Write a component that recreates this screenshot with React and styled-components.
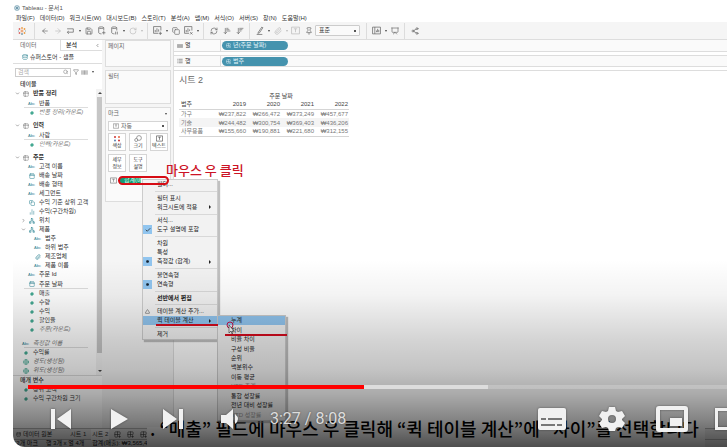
import React from "react";
import styled, { createGlobalStyle, css } from "styled-components";
import {
  ArrowLeft, ArrowRight, Save, Database, RotateCw, Copy,
  ArrowDownNarrowWide, ArrowDownWideNarrow, Paperclip, Type, Pin, Presentation, Share2, Search, Filter,
  ChevronLeft, ChevronDown, ChevronRight, Table2, Calendar, Network, Globe, Hash, RefreshCw,
  List, Grid2X2Plus, Check, Triangle, ChartNoAxesColumn, Circle,
} from "lucide-react";

const Global = createGlobalStyle`
  * { box-sizing: border-box; }
  body { margin: 0; background: #fff; overflow: hidden; }
  button, input, select { font: inherit; color: inherit; margin: 0; padding: 0; border: 0; background: none; }
`;

const Stage = styled.main`
  position: relative;
  display: flex;
  flex-direction: column;
  min-height: 100vh;
  margin-left: 13px;
  overflow: hidden;
  border-bottom-left-radius: 12px;
  background: #fff;
  color: #333;
  font: 6px/9px "Liberation Sans", "Noto Sans CJK KR", sans-serif;
  white-space: nowrap;
`;

const TitleBar = styled.header`
  display: flex;
  align-items: center;
  gap: 2px;
  height: 14px;
  padding: 2px 1px 0;
  color: #555;
`;

const MenuBar = styled.nav`
  display: flex;
  gap: 5px;
  height: 8px;
  padding-left: 3px;
  line-height: 7px;
`;

const MenuButton = styled.button`
  line-height: 7px;
`;

const Toolbar = styled.div`
  display: flex;
  align-items: center;
  height: 18px;
  background: #f5f5f5;
  border-bottom: 1px solid #ddd;
  svg { display: block; }
`;

const Tool = styled.button`
  display: grid;
  place-items: center;
  width: ${(p) => (p.$wide ? 18 : 13)}px;
  height: 12px;
  color: ${(p) => (p.$off ? "#bbb" : "#666")};
`;

const Caret = styled.span`
  width: 5px;
  display: grid;
  place-items: center;
  &::after {
    content: "";
    border: 1px solid transparent;
    border-top: 2px solid ${(p) => (p.$off ? "#bbb" : "#444")};
    border-bottom: 0;
  }
`;

const Divider = styled.span`
  width: 1px;
  height: 16px;
  margin: 0 3px;
  background: #dcdcdc;
`;

const FitSelect = styled.select`
  width: 45px;
  height: 11px;
  margin: 0 3px 0 0;
  padding: 0 3px;
  border: 1px solid #ccc;
  border-radius: 1px;
  appearance: none;
  background: linear-gradient(#555, #555) right 3px center / 2px 2px no-repeat #fafafa;
  line-height: 9px;
`;

const Workspace = styled.div`
  display: grid;
  grid-template-columns: 89px 71px 1fr;
  flex: 1;
`;

const DataPane = styled.aside`
  display: flex;
  flex-direction: column;
  background: #fff;
`;

const Tabs = styled.div`
  display: grid;
  grid-template-columns: 47px 1fr;
  height: 11px;
`;

const Tab = styled.button`
  display: flex;
  justify-content: space-between;
  align-items: center;
  padding: 0 2px 0 ${(p) => (p.$active ? 7 : 5)}px;
  border: solid #ddd;
  border-width: ${(p) => (p.$active ? "0" : "0 0 1px 1px")};
  color: ${(p) => (p.$active ? "#666" : "#222")};
  font-weight: ${(p) => (p.$active ? 400 : 500)};
`;

const Source = styled.div`
  display: flex;
  align-items: center;
  gap: 2px;
  height: 13px;
  padding-left: 9px;
  border-bottom: 1px solid #ddd;
`;

const SearchRow = styled.div`
  display: flex;
  align-items: center;
  gap: 2px;
  height: 16px;
  padding: 0 5px 0 2px;
  color: #666;
`;

const SearchBox = styled.label`
  display: flex;
  align-items: center;
  width: 56px;
  height: 9px;
  padding: 0 2px;
  border: 1px solid #ccc;
  input { width: 100%; min-width: 0; height: 7px; line-height: 7px; outline: 0; }
  input::placeholder { color: #aaa; }
`;

const Heading = styled.h2`
  margin: 0;
  padding-left: 7px;
  font-size: 6px;
  font-weight: 500;
  line-height: 9px;
`;

const TreeWrap = styled.div`
  display: grid;
  grid-template-columns: 1fr 7px;
  border-bottom: 1px solid #ddd;
`;

const Tree = styled.ul`
  margin: 0;
  padding: 0 8px 0 2px;
  list-style: none;
`;

const Row = styled.li`
  display: grid;
  grid-template-columns: 7px 11px 1fr;
  align-items: center;
  height: ${(p) => (p.$line ? 10 : 9)}px;
  margin-top: ${(p) => (p.$gap ? 4 : 0)}px;
  padding-left: ${(p) => p.$level * 6}px;
  background: ${(p) => (p.$line ? "linear-gradient(#ddd, #ddd) 9px 100% / 100% 1px no-repeat" : "none")};
  font-weight: ${(p) => (p.$bold ? 700 : 400)};
  font-style: ${(p) => (p.$italic ? "italic" : "normal")};
  color: ${(p) => (p.$italic ? "#777" : "#333")};
  svg { display: block; }
`;

const Glyph = styled.span`
  display: flex;
  justify-content: center;
  width: 7px;
  color: ${(p) => p.$tone};
  font-size: 4px;
  font-style: normal;
  font-weight: 400;
`;

const Scroll = styled.div`
  display: flex;
  flex-direction: column;
  justify-content: space-between;
  align-items: center;
  background: #f3f3f3;
  &::before, &::after {
    content: "";
    margin: 3px 0;
    border: 2px solid transparent;
  }
  &::before { border-bottom-color: #444; border-top: 0; }
  &::after { border-top-color: #444; border-bottom: 0; }
`;

const Thumb = styled.span`
  width: 6px;
  flex: 1;
  margin-bottom: 14px;
  background: #c6c6c6;
`;

const CardsPane = styled.section`
  display: flex;
  flex-direction: column;
  gap: 3px;
  padding: 0 2px 0 3px;
  background: #f5f5f5;
`;

const Card = styled.div`
  min-height: ${(p) => p.$h}px;
  padding: 1px 2px;
  border: 1px solid #ddd;
  background: #fafafa;
  color: #666;
`;

const CardTitle = styled.div`
  display: flex;
  justify-content: space-between;
  align-items: center;
`;

const MarkType = styled.label`
  display: grid;
  grid-template-columns: 8px 1fr;
  align-items: center;
  height: 10px;
  margin: 3px 0 2px;
  padding-left: 4px;
  border: 1px solid #d5d5d5;
  background: #fff;
  select {
    appearance: none;
    height: 8px;
    line-height: 8px;
    background: linear-gradient(#555, #555) right 3px center / 2px 2px no-repeat;
  }
`;

const MarkGrid = styled.div`
  display: grid;
  grid-template-columns: repeat(3, 1fr);
  grid-auto-rows: 18px;
  gap: 3px;
`;

const MarkButton = styled.button`
  display: flex;
  flex-direction: column;
  align-items: center;
  justify-content: space-evenly;
  border: 1px solid #d5d5d5;
  background: #fff;
  color: #333;
  font-size: 5px;
  line-height: 7px;
`;

const PillRow = styled.div`
  position: relative;
  display: flex;
  align-items: center;
  gap: 2px;
  height: 9px;
  margin-top: 4px;
  padding-left: 2px;
`;

const Measure = styled.span`
  width: 48px;
  height: 7px;
  padding-left: 5px;
  border-radius: 4px;
  background: linear-gradient(90deg, #159b73 22px, #fafafa 22px);
  color: #d9fff0;
  line-height: 7px;
`;

const Ring = styled.span`
  position: absolute;
  z-index: 4;
  top: 0;
  left: 10px;
  width: 51px;
  height: 9px;
  border: 2px solid #d60c14;
  border-radius: 5px;
`;

const Note = styled.strong`
  position: absolute;
  z-index: 4;
  top: -15px;
  left: 58px;
  color: #cc1426;
  font: 500 13px/18px "Noto Sans CJK KR", sans-serif;
`;

const Menu = styled.div`
  position: absolute;
  z-index: 3;
  top: 3px;
  left: 34px;
  display: flex;
  flex-direction: column;
  width: 76px;
  height: 161px;
  border: 1px solid #ccc;
  background: #f2f2f2;
  box-shadow: 2px 2px 1px #8888;
  color: #222;
`;

const menuItem = css`
  display: grid;
  align-items: center;
  text-align: left;
  line-height: 9px;
  background: ${(p) => (p.$hot ? "#91c5ef" : "transparent")};
`;

const Item = styled.button`
  ${menuItem}
  grid-template-columns: 14px 1fr 8px;
  flex: 0 0 9px;
  font-weight: ${(p) => (p.$bold ? 700 : 400)};
`;

const Mark = styled.span`
  display: grid;
  place-items: center;
  width: 9px;
  height: 9px;
  background: ${(p) => (p.$on ? "#91c5ef" : "transparent")};
`;

const Arrow = styled.span`
  width: 0;
  border: 2px solid transparent;
  border-left-color: #222;
  border-right: 0;
`;

const Rule = styled.span`
  flex: 1;
  margin-left: 12px;
  background: linear-gradient(#d8d8d8, #d8d8d8) center / 100% 1px no-repeat;
`;

const Submenu = styled.div`
  position: absolute;
  top: 135px;
  left: 74px;
  display: grid;
  grid-auto-rows: 1fr;
  width: 69px;
  height: 106px;
  border: 1px solid #ccc;
  background: #f2f2f2;
  box-shadow: 2px 2px 1px #8888;
`;

const SubItem = styled.button`
  ${menuItem}
  padding-left: 13px;
  color: ${(p) => (p.$dim ? "#999" : "#222")};
`;

const Stroke = styled.span`
  position: absolute;
  top: ${(p) => p.$top}px;
  left: ${(p) => p.$left}px;
  width: 62px;
  height: 2px;
  background: #d60c1e;
`;

const Pointer = styled.svg`
  position: absolute;
  top: 140px;
  left: 83px;
`;

const View = styled.section`
  display: flex;
  flex-direction: column;
  min-width: 0;
  border-left: 1px solid #ddd;
  background: #fff;
`;

const Shelf = styled.div`
  display: grid;
  grid-template-columns: 8px 37px 1fr;
  align-items: center;
  height: 12px;
  margin-bottom: 3px;
  padding-left: 3px;
  border-bottom: 1px solid #ddd;
  border-top: ${(p) => (p.$top ? "1px solid #ddd" : "0")};
  background: linear-gradient(#ddd, #ddd) 46px 0 / 1px 100% no-repeat #fafafa;
`;

const BluePill = styled.span`
  display: flex;
  align-items: center;
  gap: 2px;
  width: 66px;
  height: 9px;
  padding-left: 4px;
  border-radius: 5px;
  background: #4593ae;
  color: #e4f4fa;
`;

const Sheet = styled.div`
  flex: 1;
  padding: 3px 5px;
  border-top: 1px solid #ddd;
`;

const SheetTitle = styled.h1`
  margin: 0 0 4px;
  color: #666;
  font-size: 9px;
  font-weight: 400;
  line-height: 13px;
`;

const Data = styled.table`
  width: 170px;
  border-collapse: collapse;
  table-layout: fixed;
  border-bottom: 1px solid #d5d5d5;
  color: #777;
  th, td { padding: 0 1px; height: 9px; font-weight: 400; line-height: 8px; text-align: right; }
  th:first-child { padding-left: 2px; text-align: left; }
  thead th[colspan] { padding: 0; text-align: center; color: #444; }
  thead tr:last-child { border-bottom: 1px solid #d5d5d5; color: #444; }
  tbody tr:nth-child(2) { background: #f4f4f4; }
`;

const Footer = styled.footer`
  height: 19px;
  background: #f0f0f0;
  border-top: 1px solid #bbb;
`;

const SheetTabs = styled.div`
  display: flex;
  align-items: center;
  height: 11px;
  gap: 4px;
  padding-left: 2px;
  border-bottom: 1px solid #bbb;
`;

const SheetTab = styled.button`
  display: flex;
  align-items: center;
  gap: 2px;
  height: 11px;
  padding: 0 1px;
  margin-right: ${(p) => (p.$space ? 12 : 0)}px;
  background: ${(p) => (p.$active ? "#fff" : "transparent")};
`;

const Status = styled.div`
  display: flex;
  gap: 8px;
  line-height: 7px;
  color: #111;
`;

const Caption = styled.p`
  position: absolute;
  left: 134px;
  right: 22px;
  bottom: 0;
  height: 27px;
  margin: 0;
  padding-left: 3px;
  background: linear-gradient(transparent 7px, #fff 7px);
  color: #000;
  font: 500 18px/16px "Noto Sans CJK KR", sans-serif;
`;

const Shade = styled.div`
  position: absolute;
  z-index: 5;
  inset: auto 0 0;
  height: 187px;
  pointer-events: none;
  background: linear-gradient(#0000, #0000000c 35px, #0000002b 80px, #0000003c 110px, #00000056 135px, #0000007c 160px, #000000b0);
`;

const Player = styled.div`
  position: absolute;
  z-index: 6;
  left: 15px;
  right: 0;
  bottom: 15px;
  color: #eee;
`;

const Seek = styled.input`
  display: block;
  width: 100%;
  height: 4px;
  appearance: none;
  background: linear-gradient(90deg, #f00 336px, #ddd 336px, #ddd 460px, #fff3 460px);
  &::-webkit-slider-thumb { appearance: none; width: 0; height: 0; }
`;

const Controls = styled.div`
  display: flex;
  align-items: center;
  height: 26px;
  margin-top: 17px;
  padding-left: 19px;
`;

const Control = styled.button`
  display: block;
  flex: 0 0 auto;
  width: 32px;
  height: 26px;
  margin-right: ${(p) => p.$after}px;
  svg { display: block; width: 32px; height: 26px; fill: #f1f1f1; filter: drop-shadow(0 0 1px #0006); }
`;

const Time = styled.span`
  flex: 1;
  color: #ddd;
  font: 16px/24px Roboto, sans-serif;
  text-shadow: 0 0 2px #0006;
`;

const teal = "#2b8090";
const green = "#2a9d84";

function FieldGlyph({ kind }) {
  const icons = {
    date: Calendar, clip: Paperclip, link: Copy, path: Network, bins: ChartNoAxesColumn, geo: Globe, table: Table2, num: Hash,
  };
  if (kind === "abc") return <Glyph $tone={teal}>Abc</Glyph>;
  const Icon = icons[kind];
  const tone = kind === "table" ? "#777" : kind === "num" || kind === "geo" ? green : teal;
  return <Glyph $tone={tone}><Icon size={kind === "num" ? 4 : 6} strokeWidth={kind === "num" ? 4 : 2} /></Glyph>;
}

const fields = [
  { t: "반품 정리", k: "table", l: 0, open: true, b: true },
  { t: "반품", k: "abc", l: 1, line: true },
  { t: "반품 정리(카운트)", k: "num", l: 1, i: true },
  { t: "인력", k: "table", l: 0, open: true, b: true, gap: true },
  { t: "사람", k: "abc", l: 1, line: true },
  { t: "인력(카운트)", k: "num", l: 1, i: true },
  { t: "주문", k: "table", l: 0, open: true, b: true, gap: true },
  { t: "고객 이름", k: "abc", l: 1 },
  { t: "배송 날짜", k: "date", l: 1 },
  { t: "배송 형태", k: "abc", l: 1 },
  { t: "세그먼트", k: "abc", l: 1 },
  { t: "수익 기준 상위 고객", k: "link", l: 1 },
  { t: "수익(구간차원)", k: "bins", l: 1 },
  { t: "위치", k: "path", l: 1, closed: true },
  { t: "제품", k: "path", l: 1, open: true },
  { t: "범주", k: "abc", l: 2 },
  { t: "하위 범주", k: "abc", l: 2 },
  { t: "제조업체", k: "clip", l: 2 },
  { t: "제품 이름", k: "abc", l: 2 },
  { t: "주문 Id", k: "abc", l: 1 },
  { t: "주문 날짜", k: "date", l: 1, line: true },
  { t: "매출", k: "num", l: 1 },
  { t: "수량", k: "num", l: 1 },
  { t: "수익", k: "num", l: 1 },
  { t: "할인율", k: "num", l: 1 },
  { t: "주문(카운트)", k: "num", l: 1, i: true },
  { t: "측정값 이름", k: "abc", l: 0, i: true, gap: true, line: true },
  { t: "수익률", k: "num", l: 0 },
  { t: "경도(생성됨)", k: "geo", l: 0, i: true },
  { t: "위도(생성됨)", k: "geo", l: 0, i: true },
];

function Field({ f }) {
  return (
    <Row $level={f.l} $line={f.line} $gap={f.gap} $bold={f.b} $italic={f.i}>
      <span>{f.open ? <ChevronDown size={5} /> : f.closed ? <ChevronRight size={5} /> : null}</span>
      <FieldGlyph kind={f.k} />
      <span>{f.t}</span>
    </Row>
  );
}

const menuItems = [
  { t: "필터..." }, null,
  { t: "필터 표시" }, { t: "워크시트에 적용", arrow: true }, null,
  { t: "서식..." }, { t: "도구 설명에 포함", mark: "check" }, null,
  { t: "차원" }, { t: "특성" }, { t: "측정값 (합계)", mark: "dot", arrow: true }, null,
  { t: "불연속형" }, { t: "연속형", mark: "dot" }, null,
  { t: "선반에서 편집", bold: true }, null,
  { t: "테이블 계산 추가...", mark: "delta" }, { t: "퀵 테이블 계산", arrow: true, hot: true }, null,
  { t: "제거" },
];

const quickItems = ["누계", "차이", "비율 차이", "구성 비율", "순위", "백분위수", "이동 평균", "YTD 총계", "통합 성장률", "전년 대비 성장률", "YTD 성장률"];

function ContextMenu() {
  return (
    <Menu role="menu">
      {menuItems.map((m, n) =>
        m ? (
          <Item key={n} role="menuitem" $hot={m.hot} $bold={m.bold}>
            <Mark $on={m.mark === "check" || m.mark === "dot"}>
              {m.mark === "check" && <Check size={6} strokeWidth={3} />}
              {m.mark === "dot" && <Circle size={3} fill="#123" />}
              {m.mark === "delta" && <Triangle size={5} />}
            </Mark>
            <span>{m.t}</span>
            {m.arrow && <Arrow />}
          </Item>
        ) : (
          <Rule key={n} />
        )
      )}
      <Submenu role="menu">
        {quickItems.map((t, n) => (
          <SubItem key={t} role="menuitem" $hot={n === 0} $dim={n === 7 || n === 10}>{t}</SubItem>
        ))}
      </Submenu>
      <Stroke $top={144} $left={13} />
      <Stroke $top={154} $left={82} />
      <Pointer width="10" height="15" viewBox="0 0 10 15">
        <circle cx="4" cy="5" r="3" fill="none" stroke="#c3124c" strokeWidth="1" />
        <path d="M3 5v8l2-2 1 3 1-1-1-2h2z" fill="#fff" stroke="#333" strokeWidth=".6" />
      </Pointer>
    </Menu>
  );
}

function TableauLogo({ size }) {
  return (
    <svg width={size} height={size} viewBox="0 0 16 16" fill="none" strokeWidth="1.4">
      <path d="M8 5v6M5 8h6" stroke="#e8762d" />
      <path d="M8 0v4M6 2h4" stroke="#eb912c" />
      <path d="M8 12v4M6 14h4" stroke="#5b879b" />
      <path d="M3 2v4M1 4h4M3 10v4M1 12h4" stroke="#d9534f" />
      <path d="M13 2v4M11 4h4M13 10v4M11 12h4" stroke="#eb912c" />
      <path d="M1 7v2M15 7v2" stroke="#59879b" />
    </svg>
  );
}

function Line({ size, paths }) {
  return (
    <svg width={size} height={size} viewBox="0 0 16 16" fill="none" stroke="currentColor" strokeWidth="1.3">
      <path d={paths} />
    </svg>
  );
}

const drawn = {
  redo: "M2 5h11v6H3M5 9l-3 2 3 3",
  dbPlus: "M3 3c0-2 9-2 9 0v5M3 3v9c0 1 3 2 5 2M3 3c0 2 9 2 9 0M9 12h6M12 9v6",
  dbPause: "M3 3c0-2 9-2 9 0v5M3 3v9c0 1 3 2 5 2M3 3c0 2 9 2 9 0M10 10v5M13 10v5",
  chartPlus: "M9 13H1V1h13v7M4 11V7M7 11V4M10 10V6M10 13h6M13 10v6",
  chartX: "M9 13H1V1h13v7M4 11V7M7 11V4M10 9V6M11 11l4 4M15 11l-4 4",
  pen: "M6 11l6-9 2 1-6 9-3 1zM3 15h10",
  textBox: "M1 2h14v12H1zM5 5h6M8 5v6",
  cards: "M1 2h14v12H1zM5 2v12M8 11V8M10 11V5M12 11V7",
  bars: "M2 3v10M5 3v10M8 3v10M11 3v10M14 3v10",
};

function ToolIcon({ icon: Icon, draw, label, off, caret }) {
  return (
    <>
      <Tool aria-label={label} $off={off}>
        {draw ? <Line size={9} paths={drawn[draw]} /> : <Icon size={8} strokeWidth={2} />}
      </Tool>
      {caret && <Caret $off={off} />}
    </>
  );
}

const sheetRows = [
  ["가구", "₩237,822", "₩266,472", "₩373,249", "₩457,677"],
  ["기술", "₩244,482", "₩300,754", "₩369,403", "₩436,206"],
  ["사무용품", "₩155,660", "₩190,881", "₩221,680", "₩312,155"],
];

export default function App() {
  return (
    <Stage>
      <Global />
      <TitleBar>
        <svg width="6" height="6" viewBox="0 0 12 12" fill="none" stroke="#3b7691">
          <circle cx="6" cy="6" r="5" /><path d="M6 2v8M2 6h8M3 3l6 6M9 3l-6 6" />
        </svg>
        Tableau - 문서1
      </TitleBar>
      <MenuBar>
        {["파일(F)", "데이터(D)", "워크시트(W)", "대시보드(B)", "스토리(T)", "분석(A)", "맵(M)", "서식(O)", "서버(S)", "창(N)", "도움말(H)"].map((t) => (
          <MenuButton key={t}>{t}</MenuButton>
        ))}
      </MenuBar>
      <Toolbar>
        <Tool $wide aria-label="시작"><TableauLogo size={8} /></Tool>
        <Divider />
        <ToolIcon icon={ArrowLeft} label="뒤로" />
        <ToolIcon icon={ArrowRight} label="앞으로" off />
        <ToolIcon draw="redo" label="다시 실행" caret />
        <ToolIcon icon={Save} label="저장" />
        <ToolIcon draw="dbPlus" label="새 데이터 원본" />
        <ToolIcon draw="dbPause" label="자동 업데이트" caret />
        <ToolIcon icon={RotateCw} label="새로 고침" off caret />
        <Divider />
        <ToolIcon draw="chartPlus" label="새 워크시트" caret />
        <ToolIcon icon={Copy} label="복제" />
        <ToolIcon draw="chartX" label="지우기" caret />
        <Divider />
        <ToolIcon icon={RefreshCw} label="바꾸기" />
        <ToolIcon icon={ArrowDownNarrowWide} label="오름차순" />
        <ToolIcon icon={ArrowDownWideNarrow} label="내림차순" />
        <Divider />
        <ToolIcon draw="pen" label="하이라이트" caret />
        <ToolIcon icon={Paperclip} label="그룹" off caret />
        <ToolIcon draw="textBox" label="레이블" off />
        <ToolIcon icon={Pin} label="고정" />
        <FitSelect aria-label="맞춤" defaultValue="표준"><option>표준</option></FitSelect>
        <Divider />
        <ToolIcon draw="cards" label="카드 표시" caret />
        <ToolIcon icon={Presentation} label="프레젠테이션" />
        <Divider />
        <ToolIcon icon={Share2} label="공유" />
      </Toolbar>
      <Workspace>
        <DataPane>
          <Tabs>
            <Tab $active>데이터</Tab>
            <Tab>분석<ChevronLeft size={5} /></Tab>
          </Tabs>
          <Source><Database size={6} color={teal} />슈퍼스토어 - 샘플</Source>
          <SearchRow>
            <SearchBox><input aria-label="검색" placeholder="검색" /><Search size={6} /></SearchBox>
            <Filter size={6} />
            <Line size={7} paths={drawn.bars} />
            <Caret />
          </SearchRow>
          <Heading>테이블</Heading>
          <TreeWrap>
            <Tree>{fields.map((f) => <Field key={f.t + f.l} f={f} />)}</Tree>
            <Scroll><Thumb /></Scroll>
          </TreeWrap>
          <Heading>매개 변수</Heading>
          <Tree>
            <Field f={{ t: "상위 고객", k: "num", l: 0 }} />
            <Field f={{ t: "수익 구간차원 크기", k: "num", l: 0 }} />
          </Tree>
        </DataPane>
        <CardsPane>
          <Card $h={27}>페이지</Card>
          <Card $h={34}>필터</Card>
          <Card $h={95}>
            <CardTitle>마크<Caret /></CardTitle>
            <MarkType>
              <Line size={6} paths={drawn.textBox} />
              <select aria-label="마크 유형" defaultValue="자동"><option>자동</option></select>
            </MarkType>
            <MarkGrid>
              <MarkButton>
                <svg width="8" height="7" viewBox="0 0 8 7">
                  <circle cx="2" cy="2" r="1" fill="#c33" /><circle cx="6" cy="2" r="1" fill="#e6603c" />
                  <circle cx="2" cy="5.5" r="1" fill="#5a7fb0" /><circle cx="6" cy="5.5" r="1" fill="#c33" />
                </svg>
                색상
              </MarkButton>
              <MarkButton>
                <svg width="8" height="7" viewBox="0 0 8 7" fill="none" stroke="#777" strokeWidth=".7">
                  <circle cx="5" cy="3" r="2.4" /><circle cx="2.2" cy="5" r="1.5" fill="#fff" />
                </svg>
                크기
              </MarkButton>
              <MarkButton><Line size={7} paths={drawn.textBox} />텍스트</MarkButton>
              <MarkButton>세부<br />정보</MarkButton>
              <MarkButton>도구<br />설명</MarkButton>
            </MarkGrid>
            <PillRow>
              <Line size={7} paths={drawn.textBox} />
              <Measure>합계(매</Measure>
              <Ring />
              <Note>마우스 우 클릭</Note>
              <ContextMenu />
            </PillRow>
          </Card>
        </CardsPane>
        <View>
          <Shelf><Line size={6} paths={drawn.bars} /><span>열</span><BluePill><Grid2X2Plus size={5} />년(주문 날짜)</BluePill></Shelf>
          <Shelf $top><List size={6} /><span>행</span><BluePill><Grid2X2Plus size={5} />범주</BluePill></Shelf>
          <Sheet>
            <SheetTitle>시트 2</SheetTitle>
            <Data>
              <thead>
                <tr><td /><th colSpan={4}>주문 날짜</th></tr>
                <tr>{["범주", "2019", "2020", "2021", "2022"].map((t) => <th key={t} scope="col">{t}</th>)}</tr>
              </thead>
              <tbody>
                {sheetRows.map(([name, ...vals]) => (
                  <tr key={name}><th scope="row">{name}</th>{vals.map((v) => <td key={v}>{v}</td>)}</tr>
                ))}
              </tbody>
            </Data>
          </Sheet>
        </View>
      </Workspace>
      <Footer>
        <SheetTabs>
          <SheetTab $space><Database size={5} />데이터 원본</SheetTab>
          <SheetTab>시트 1</SheetTab>
          <SheetTab $active>시트 2</SheetTab>
          <SheetTab aria-label="새 워크시트"><Grid2X2Plus size={7} /></SheetTab>
          <SheetTab aria-label="새 대시보드"><Grid2X2Plus size={7} /></SheetTab>
          <SheetTab aria-label="새 스토리"><Grid2X2Plus size={7} /></SheetTab>
        </SheetTabs>
        <Status><span>12개 마크</span><span>행 3개 x 열 4개</span><span>합계(매출): ₩3,565,440</span></Status>
      </Footer>
      <Caption>. “매출” 필드에 마우스 우 클릭해 “퀵 테이블 계산”에 “차이”를 선택합니다</Caption>
      <Shade />
      <Player>
        <Seek type="range" aria-label="재생 위치" min="0" max="488" defaultValue="207" />
        <Controls>
          <Control $after={25} aria-label="이전">
            <svg viewBox="0 0 32 26"><path d="M4 3h4v20H4zM24 3v20L10 13z" /></svg>
          </Control>
          <Control $after={23} aria-label="재생">
            <svg viewBox="0 0 32 26"><path d="M7 3l17 10L7 23z" /></svg>
          </Control>
          <Control $after={21} aria-label="다음">
            <svg viewBox="0 0 32 26"><path d="M4 3l14 10L4 23zM20 3h4v20h-4z" /></svg>
          </Control>
          <Control $after={26} aria-label="음소거">
            <svg viewBox="0 0 32 26"><path d="M9 9h5l7-6v20l-7-6H9zM23 8q6 5 0 10z" /></svg>
          </Control>
          <Time>3:27 / 8:08</Time>
          <Control $after={28} aria-label="자막">
            <svg viewBox="0 0 32 26"><path d="M4 2h24q2 0 2 2v18q0 2-2 2H4q-2 0-2-2V4q0-2 2-2z" /><path fill="#777" d="M5 12v2h5v-2zM12 12v2h14v-2zM5 18v2h14v-2zM21 18v2h5v-2z" /></svg>
          </Control>
          <Control $after={28} aria-label="설정">
            <svg viewBox="0 0 32 26"><path fillRule="evenodd" d="M13 1h6l1 4 2 1 4-1 3 5-3 3v1l3 3-3 5-4-1-2 1-1 3h-6l-1-3-2-1-4 1-3-5 3-3v-1l-3-3 3-5 4 1 2-1zM16 9a4 4 0 1 0 0 8a4 4 0 1 0 0-8z" /></svg>
          </Control>
          <Control $after={25} aria-label="미니 플레이어">
            <svg viewBox="0 0 32 26"><path fillRule="evenodd" d="M3 0h26q3 0 3 3v20q0 3-3 3H3q-3 0-3-3V3q0-3 3-3zM4 4v18h24V4zM14 12h12v8H14z" /></svg>
          </Control>
          <Control $after={-18} aria-label="영화관 모드">
            <svg viewBox="0 0 32 26"><path fillRule="evenodd" d="M2 2h30v22H2zM5 5v16h24V5z" /></svg>
          </Control>
        </Controls>
      </Player>
    </Stage>
  );
}
